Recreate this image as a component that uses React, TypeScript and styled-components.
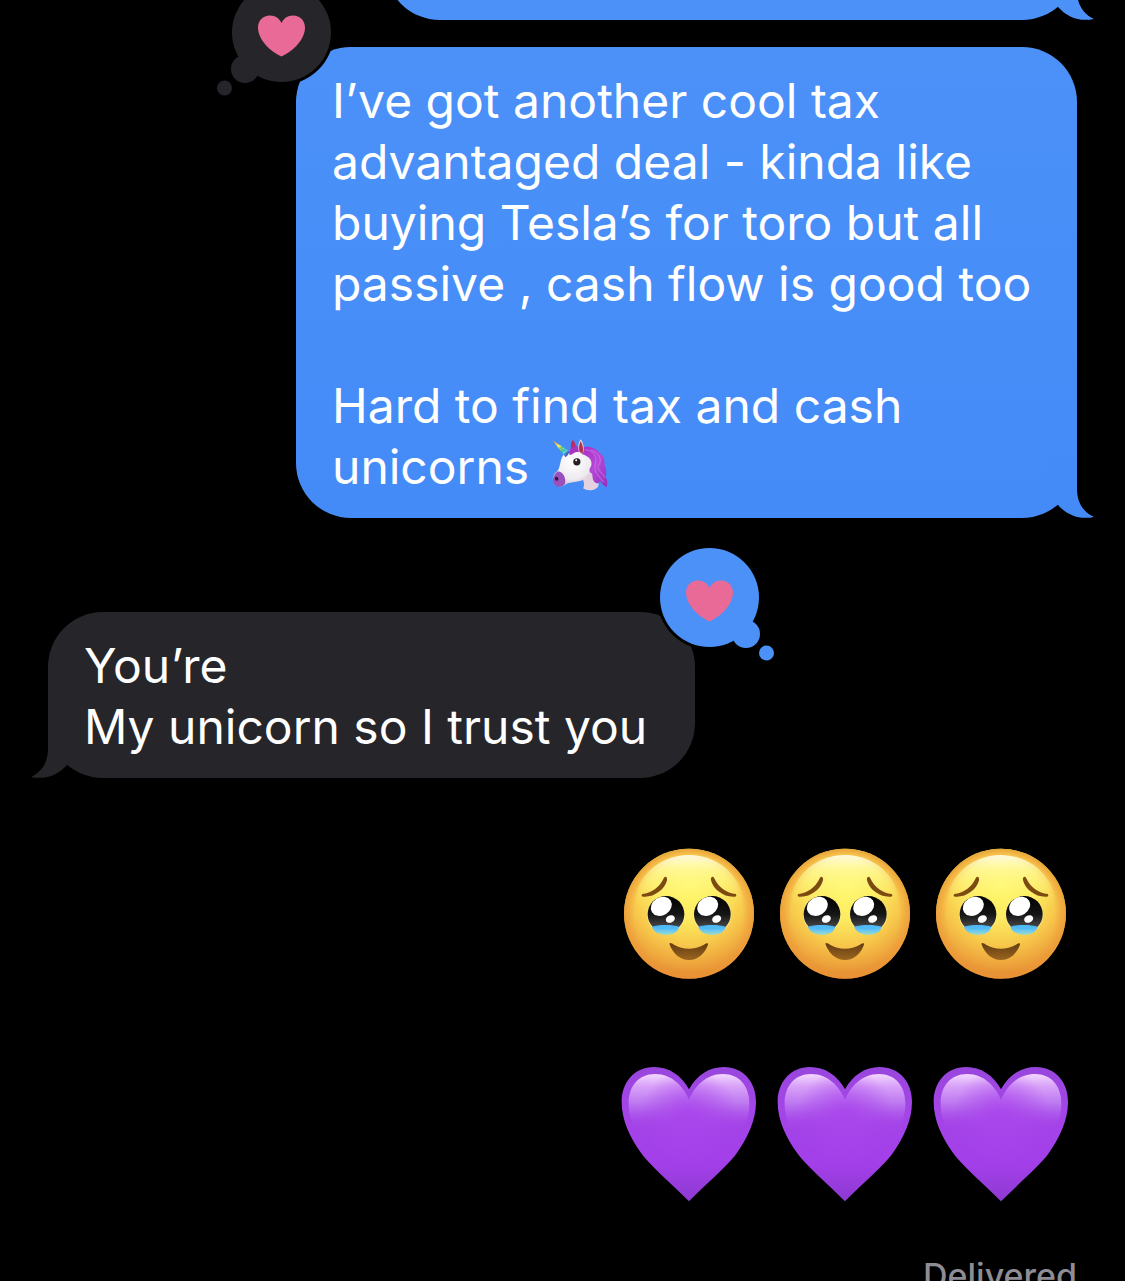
import React, { useId } from "react";
import styled, { createGlobalStyle, css } from "styled-components";

const BLUE = "#4b91f8";
const BLUE_LOW = "#458bf8";
const GRAY = "#26252a";

const GlobalStyle = createGlobalStyle`
  *, *::before, *::after { box-sizing: border-box; }
  html, body { margin: 0; background: #000; }
`;

const Screen = styled.main`
  height: 100vh;
  overflow: hidden;
  background: #000;
  color: #fff;
  font-family: Inter, "Liberation Sans", sans-serif;
  font-size: 48px;
  line-height: 61px;
`;

const Thread = styled.div`
  display: flex;
  flex-direction: column;
  padding: 0 48px;
  margin-top: -146px;
`;

const Row = styled.div<{ $from: "me" | "them"; $gap?: number }>`
  display: flex;
  justify-content: ${(p) => (p.$from === "me" ? "flex-end" : "flex-start")};
  margin-top: ${(p) => p.$gap ?? 0}px;
`;

const Bubble = styled.div<{ $from: "me" | "them" }>`
  position: relative;
  max-width: 781px;
  border-radius: 55px;
  ${(p) =>
    p.$from === "me"
      ? css`
          padding: 23px 36px 21px;
          background: linear-gradient(${BLUE}, ${BLUE_LOW});
        `
      : css`
          padding: 23px 48px 21px 36px;
          background: ${GRAY};
        `}
`;

const EarlierBubble = styled(Bubble)`
  width: 692px;
  min-height: 166px;
  background: ${BLUE};
`;

const Paragraph = styled.p`
  margin: 0;
  white-space: pre-line;

  & + & {
    margin-top: 61px;
  }
`;

const TailSvg = styled.svg<{ $from: "me" | "them" }>`
  position: absolute;
  bottom: 0;
  width: 48px;
  height: 60px;
  ${(p) => (p.$from === "me" ? "right: -18px;" : "left: -18px; transform: scaleX(-1);")}
`;

const ReactionSvg = styled.svg<{ $side: "left" | "right" }>`
  position: absolute;
  top: -67px;
  width: 120px;
  height: 118px;
  ${(p) => (p.$side === "right" ? "right: -81px;" : "left: -81px; transform: scaleX(-1);")}
`;

const InlineEmoji = styled.svg`
  width: 58px;
  height: 53px;
  margin-left: 8px;
  vertical-align: -8px;
`;

const EmojiLine = styled.div`
  display: flex;
  gap: 20px;
  padding-right: 8px;
`;

const BigEmoji = styled.svg`
  display: block;
  width: 136px;
  height: 136px;
`;

const Status = styled.div`
  color: #8e8d93;
  font-size: 34px;
  font-weight: 500;
  line-height: 40px;
`;

function Tail({ from, fill }: { from: "me" | "them"; fill: string }) {
  return (
    <TailSvg $from={from} viewBox="0 0 48 60" aria-hidden="true">
      <path d="M30 0V31C30 44 36 54 47 59C32 62 20 57 11 47L0 30V0Z" fill={fill} />
    </TailSvg>
  );
}

function Reaction({ side, fill }: { side: "left" | "right"; fill: string }) {
  return (
    <ReactionSvg $side={side} viewBox="-0.5 0 120 118" role="img" aria-label="Loved">
      <circle cx="53" cy="52.5" r="52.5" fill="#000" />
      <circle cx="53" cy="52.5" r="49.5" fill={fill} />
      <circle cx="89.5" cy="89" r="14" fill={fill} />
      <circle cx="110" cy="108" r="7.5" fill={fill} />
      <path
        d="M53 76.500C43 72 30 61 29.500 48C29.300 40.500 34.500 35.500 41.500 35.500C47 35.500 51 38.500 53 43C55 38.500 59 35.500 64.500 35.500C71.500 35.500 76.700 40.500 76.500 48C76 61 63 72 53 76.500Z"
        fill="#e96997"
      />
    </ReactionSvg>
  );
}

function Unicorn() {
  const id = useId();
  return (
    <InlineEmoji viewBox="60 40 175 160" role="img" aria-label="unicorn">
      <defs>
        <linearGradient id={`${id}horn`} gradientUnits="userSpaceOnUse" x1="64" y1="44" x2="118" y2="94">
          <stop offset="0" stopColor="#e76a50" />
          <stop offset="0.18" stopColor="#f2b13e" />
          <stop offset="0.35" stopColor="#e4ee68" />
          <stop offset="0.52" stopColor="#54bd63" />
          <stop offset="0.68" stopColor="#42c9dc" />
          <stop offset="0.82" stopColor="#4067c4" />
          <stop offset="1" stopColor="#ad3fb8" />
        </linearGradient>
        <radialGradient id={`${id}head`} cx="0.48" cy="0.35" r="0.68">
          <stop offset="0" stopColor="#fff" />
          <stop offset="0.68" stopColor="#eeeaf0" />
          <stop offset="1" stopColor="#c5b4c8" />
        </radialGradient>
        <linearGradient id={`${id}mane`} x1="0" y1="0" x2="1" y2="1">
          <stop offset="0" stopColor="#a82fc5" />
          <stop offset="0.5" stopColor="#b548d6" />
          <stop offset="1" stopColor="#9230bd" />
        </linearGradient>
      </defs>
      <path d="M150 150L190 130C192 156 207 168 203 182C196 197 168 198 157 189C162 179 160 166 150 150Z" fill="#e5d1df" />
      <path d="M120 69C119 55 121 47 126 43C132 48 135 58 136 68Z" fill="#b92e69" />
      <path d="M115 75C142 60 166 69 181 91C196 116 184 145 168 157C149 173 122 167 104 177C91 187 76 185 69 173C61 160 67 147 80 136C92 122 83 88 115 75Z" fill={`url(#${id}head)`} />
      <path d="M81 137C95 138 107 156 102 175C94 187 77 188 69 174C61 162 69 146 81 137Z" fill="#9950bd" />
      <ellipse cx="77" cy="160" rx="5" ry="6" fill="#30143d" transform="rotate(-25 77 160)" />
      <path d="M64 44L116 77C114 85 110 91 104 95Z" fill={`url(#${id}horn)`} />
      <path d="M80 63L90 60M88 73L100 67M96 84L110 74" stroke="#eff9d9" strokeWidth="2" opacity="0.65" />
      <path d="M117 88C110 77 119 67 132 63C143 59 151 65 157 77C151 74 148 80 140 79C130 78 128 86 117 88Z" fill="#a932bf" />
      <path d="M153 67C171 58 194 65 208 83C219 91 224 105 221 116C228 130 228 144 225 154C231 166 231 178 228 186C218 180 212 175 209 167C203 178 193 174 188 165C184 158 186 151 184 145C173 139 175 130 181 122C186 106 177 92 153 85Z" fill={`url(#${id}mane)`} />
      <path d="M162 72C188 74 201 92 194 114C187 137 204 152 219 170M180 73C204 79 216 105 204 118C195 134 215 140 223 157" fill="none" stroke="#dc82ef" strokeWidth="4" opacity="0.45" />
      <path d="M144 79C140 62 143 49 150 41C159 53 160 70 157 82Z" fill="#e9cfe1" />
      <path d="M146 79C143 65 145 54 150 47C157 60 158 73 155 84Z" fill="#ae304c" />
      <circle cx="138" cy="109" r="11" fill="#252024" />
      <circle cx="136" cy="104" r="3" fill="#fff" />
    </InlineEmoji>
  );
}

function TearyEye({ cx, id }: { cx: number; id: string }) {
  return (
    <g transform={`translate(${cx} 0)`}>
      <ellipse cx="0" cy="240" rx="57" ry="56" fill="#fff3a0" opacity="0.6" />
      <ellipse cx="0" cy="238" rx="55" ry="55" fill={`url(#${id}eye)`} />
      <ellipse cx="-14" cy="214" rx="33" ry="27" fill="#fff" transform="rotate(-32 -14 214)" />
      <ellipse cx="13" cy="252" rx="14" ry="11" fill="#fff" transform="rotate(-25 13 252)" />
      <path d="M-42 275C-24 268 21 268 40 275C36 292 18 300 0 300C-18 300 -38 291 -42 275Z" fill={`url(#${id}tear)`} />
      <path d="M-36 278C-18 268 18 268 35 278C16 284 -17 284 -36 278Z" fill="#51baf4" />
    </g>
  );
}

function TearyFace() {
  const id = useId();
  return (
    <BigEmoji viewBox="33 33 408 408" role="img" aria-label="face holding back tears">
      <defs>
        <radialGradient id={`${id}face`} gradientUnits="userSpaceOnUse" cx="237" cy="150" r="290">
          <stop offset="0" stopColor="#fff96f" />
          <stop offset="0.35" stopColor="#fdeb60" />
          <stop offset="0.62" stopColor="#f7c84b" />
          <stop offset="0.84" stopColor="#eda23b" />
          <stop offset="1" stopColor="#df7e2c" />
        </radialGradient>
        <radialGradient id={`${id}rim`} gradientUnits="userSpaceOnUse" cx="237" cy="242" r="202">
          <stop offset="0.8" stopColor="#ed983a" stopOpacity="0" />
          <stop offset="0.93" stopColor="#ee9a38" stopOpacity="0.6" />
          <stop offset="1" stopColor="#e2a636" />
        </radialGradient>
        <linearGradient id={`${id}shine`} gradientUnits="userSpaceOnUse" x1="0" y1="60" x2="0" y2="210">
          <stop offset="0" stopColor="#fffff0" stopOpacity="0.9" />
          <stop offset="0.3" stopColor="#fffcae" stopOpacity="0.6" />
          <stop offset="1" stopColor="#fff26b" stopOpacity="0" />
        </linearGradient>
        <linearGradient id={`${id}eye`} x1="0" y1="0" x2="0" y2="1">
          <stop offset="0" stopColor="#000" />
          <stop offset="0.5" stopColor="#151515" />
          <stop offset="0.85" stopColor="#484747" />
        </linearGradient>
        <linearGradient id={`${id}tear`} x1="0" y1="0" x2="0" y2="1">
          <stop offset="0" stopColor="#43b4f6" />
          <stop offset="0.55" stopColor="#68c7f3" />
          <stop offset="1" stopColor="#a6dcb8" />
        </linearGradient>
        <linearGradient id={`${id}mouth`} x1="0" y1="0" x2="0" y2="1">
          <stop offset="0" stopColor="#643c12" />
          <stop offset="1" stopColor="#9a6620" />
        </linearGradient>
      </defs>
      <circle cx="237" cy="236" r="195" fill={`url(#${id}face)`} />
      <circle cx="237" cy="236" r="195" fill={`url(#${id}rim)`} />
      <ellipse cx="237" cy="215" rx="165" ry="155" fill={`url(#${id}shine)`} />
      <path d="M97 177C124 174 148 158 162 128C166 122 173 127 171 136C164 165 131 188 99 185Q92 183 97 177Z" fill="#7b4b12" />
      <path d="M377 177C350 174 326 158 312 128C308 122 301 127 303 136C310 165 343 188 375 185Q382 183 377 177Z" fill="#7b4b12" />
      <TearyEye cx={168} id={id} />
      <TearyEye cx={307} id={id} />
      <path d="M178 326C181 322 186 326 192 329C219 345 254 345 282 329C289 325 294 322 294 329C284 356 264 375 237 375C209 374 188 355 178 326Z" fill={`url(#${id}mouth)`} />
    </BigEmoji>
  );
}

function PurpleHeart() {
  const id = useId();
  return (
    <BigEmoji viewBox="33 33 408 408" role="img" aria-label="purple heart">
      <defs>
        <linearGradient id={`${id}body`} x1="0" y1="0" x2="0" y2="1">
          <stop offset="0" stopColor="#9846dd" />
          <stop offset="0.3" stopColor="#a345e7" />
          <stop offset="0.72" stopColor="#a33fe9" />
          <stop offset="1" stopColor="#8d3ad2" />
        </linearGradient>
        <linearGradient id={`${id}gloss`} gradientUnits="userSpaceOnUse" x1="0" y1="55" x2="0" y2="235">
          <stop offset="0" stopColor="#f5d9ff" />
          <stop offset="0.22" stopColor="#d8a1f8" />
          <stop offset="0.5" stopColor="#bd78f0" />
          <stop offset="0.78" stopColor="#aa4eeb" stopOpacity="0.6" />
          <stop offset="1" stopColor="#a441ea" stopOpacity="0" />
        </linearGradient>
        <radialGradient id={`${id}center`} gradientUnits="userSpaceOnUse" cx="237" cy="190" r="150">
          <stop offset="0" stopColor="#a945ec" />
          <stop offset="0.4" stopColor="#a945ec" stopOpacity="0.6" />
          <stop offset="1" stopColor="#a945ec" stopOpacity="0" />
        </radialGradient>
      </defs>
      <path d="M237 103C260 61 297 36 341 36C400 36 438 81 438 140C438 197 413 247 378 298C354 330 299 378 237 439C175 378 120 330 96 298C60 247 35 197 35 140C35 81 74 36 132 36C177 36 214 61 237 103Z" fill={`url(#${id}body)`} />
      <path d="M237 136C253 96 286 57 339 57C388 57 418 93 418 145C418 184 406 213 388 242H86C68 213 56 184 56 145C56 93 86 57 135 57C188 57 221 96 237 136Z" fill={`url(#${id}gloss)`} />
      <path d="M237 136C253 96 286 57 339 57C388 57 418 93 418 145C418 184 406 213 388 242L237 345L86 242C68 213 56 184 56 145C56 93 86 57 135 57C188 57 221 96 237 136Z" fill={`url(#${id}center)`} />
    </BigEmoji>
  );
}

export default function App() {
  return (
    <>
      <GlobalStyle />
      <Screen>
        <Thread>
          <Row $from="me">
            <EarlierBubble $from="me">
              <Tail from="me" fill={BLUE} />
            </EarlierBubble>
          </Row>

          <Row $from="me" $gap={27}>
            <Bubble $from="me">
              <Tail from="me" fill={BLUE_LOW} />
              <Paragraph>
                I’ve got another cool tax advantaged deal - kinda like buying Tesla’s for toro but all
                passive , cash flow is good too
              </Paragraph>
              <Paragraph>
                Hard to find tax and cash unicorns <Unicorn />
              </Paragraph>
              <Reaction side="left" fill={GRAY} />
            </Bubble>
          </Row>

          <Row $from="them" $gap={94}>
            <Bubble $from="them">
              <Tail from="them" fill={GRAY} />
              <Paragraph>{"You’re\nMy unicorn so I trust you"}</Paragraph>
              <Reaction side="right" fill={BLUE} />
            </Bubble>
          </Row>

          <Row $from="me" $gap={68}>
            <EmojiLine>
              <TearyFace />
              <TearyFace />
              <TearyFace />
            </EmojiLine>
          </Row>

          <Row $from="me" $gap={84}>
            <EmojiLine>
              <PurpleHeart />
              <PurpleHeart />
              <PurpleHeart />
            </EmojiLine>
          </Row>

          <Row $from="me" $gap={54}>
            <Status>Delivered</Status>
          </Row>
        </Thread>
      </Screen>
    </>
  );
}
